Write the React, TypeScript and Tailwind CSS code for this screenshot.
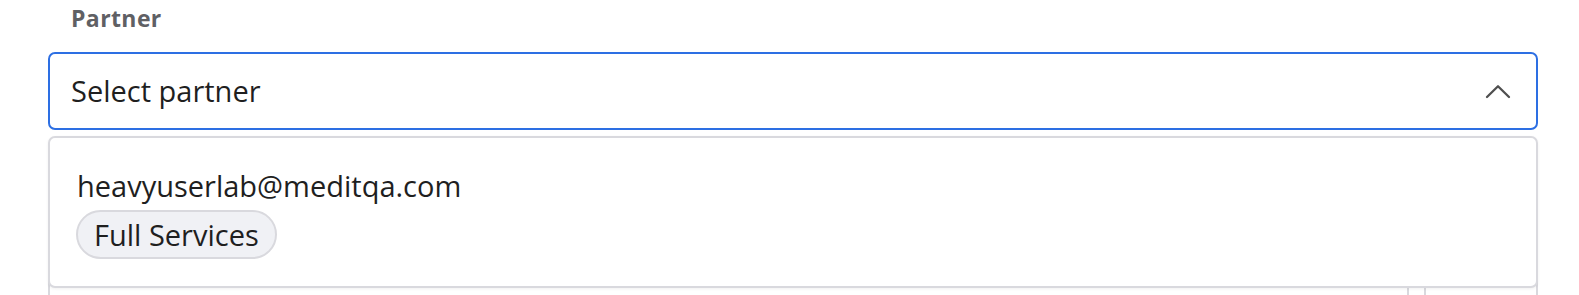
import React from 'react';

const ChevronUp = () => (
  <svg width="26" height="15" viewBox="0 0 26 15" fill="none">
    <path d="M2 13 L13 2.2 L24 13" stroke="#4f4f4f" strokeWidth="2.3" strokeLinecap="round" strokeLinejoin="round" />
  </svg>
);

const App = () => {
  return (
    <div className="w-[1579px] h-[295px] overflow-hidden bg-white font-['Open_Sans',sans-serif]">
      <div className="ml-[48px] w-[1490px]">
        <div className="pl-[23px] pt-[2px] h-[52px] text-[23px] leading-[32px] font-bold tracking-[0.4px] text-[#5f6064]">Partner</div>
        <div className="h-[78px] border-2 border-[#2d6fe3] rounded-[7px] flex items-center justify-between pl-[21px] pr-[25px]">
          <span className="text-[29px] leading-[40px] text-[#1f1f1f]">Select partner</span>
          <ChevronUp />
        </div>
        <div className="relative pt-[30px]">
          <div className="h-[200px] border-l-2 border-r-2 border-[#d9d9de] flex justify-end">
            <div className="w-[19px] mr-[110px] border-l-2 border-r-2 border-[#d9d9de]" />
          </div>
          <div className="absolute top-[6px] left-0 right-0 h-[152px] bg-white border-2 border-[#d9d9de] rounded-[7px] shadow-[0_1px_3px_rgba(0,0,0,0.06)] pl-[27px] pt-[28px]">
            <div className="text-[29px] leading-[40px] text-[#1f1f1f]">heavyuserlab@meditqa.com</div>
            <div className="mt-[4px] -ml-[1px] inline-flex items-center h-[49px] px-[16px] rounded-full border-2 border-[#d9d9de] bg-[#f0f1f5] text-[29px] text-[#1f1f1f]">
              Full Services
            </div>
          </div>
        </div>
      </div>
    </div>
  );
};

export default App;
